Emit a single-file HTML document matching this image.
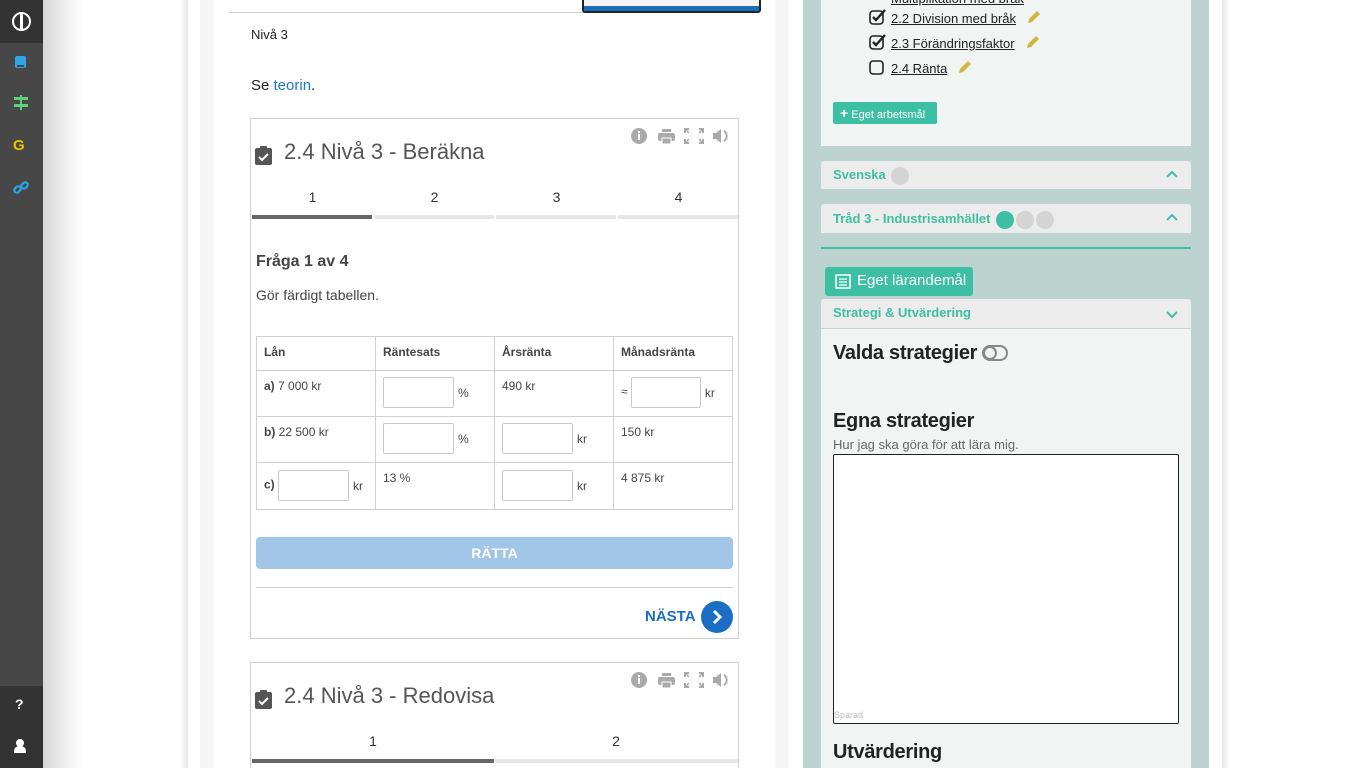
<!DOCTYPE html>
<html style="overflow:hidden;height:768px"><head><meta charset="utf-8"><style>
*{box-sizing:border-box;margin:0;padding:0}
html,body{width:1366px;height:768px;overflow:hidden}
body{background:#fff;font-family:"Liberation Sans","DejaVu Sans",sans-serif;position:relative;color:#222}
.abs{position:absolute}
#side{left:0;top:0;width:43px;height:768px;background:#474747}
#shadow{left:43px;top:0;width:40px;height:768px;background:linear-gradient(to right,#d8d8d8,#fff)}
#pshadow{left:180px;top:0;width:8px;height:768px;background:linear-gradient(to right,#fff,#e6e6e6)}
#pshadow2{left:1222px;top:0;width:8px;height:768px;background:linear-gradient(to right,#e6e6e6,#fff)}
.gray{background:#f5f5f7}
.card{border:1px solid #d0d0d0;background:#fff}
.tab{position:absolute;top:0;text-align:center;font-size:14px;color:#333}
.bar{position:absolute;height:4px;background:#e6e6e6}
table{border-collapse:collapse;font-size:12px;color:#444}
td{border:1px solid #d0d0d0;vertical-align:top;padding:8px 7px}
.inp{display:inline-block;width:71px;height:31px;border:1px solid #c8c8c8;border-radius:2px;vertical-align:middle}
.u{vertical-align:middle;margin-left:4px}
.acc{position:absolute;left:821px;width:370px;background:#ececec;color:#3dbfa3;font-weight:bold;font-size:13px;padding-left:12px;border-radius:3px 3px 0 0}
.dot{display:inline-block;width:18px;height:18px;border-radius:50%;background:#d4d4d4;vertical-align:middle;margin-left:2px}
.chev{position:absolute;right:13px;top:0}
.goal{position:absolute;left:869px;font-size:13px;color:#222}
.goal span.t{text-decoration:underline;margin-left:8px}
.pen{margin-left:10px;vertical-align:-2px}
.hic{position:absolute;left:378px;top:8px}
.clip{position:absolute;left:3px;top:26px}
</style></head><body>
<div class="abs" id="side"></div>
<div class="abs" style="left:0;top:0;width:43px;height:43px;background:#333"></div>
<div class="abs" style="left:0;top:686px;width:43px;height:82px;background:#333"></div>
<div class="abs" style="left:12px;top:12px;width:19px;height:19px;border:2px solid #fff;border-radius:50%"></div>
<div class="abs" style="left:20px;top:14px;width:3px;height:15px;background:#fff"></div>
<div class="abs" style="left:15px;top:56px;width:11px;height:12px;background:#2ea5e8;border-radius:2px"></div>
<div class="abs" style="left:17px;top:65px;width:7px;height:2px;background:#474747"></div>
<div class="abs" style="left:14px;top:97px;width:14px;height:3px;background:#5cd07a"></div>
<div class="abs" style="left:14px;top:104px;width:14px;height:3px;background:#5cd07a"></div>
<div class="abs" style="left:20px;top:95px;width:2px;height:15px;background:#5cd07a"></div>
<div class="abs" style="left:13px;top:137px;font-weight:bold;font-size:15px;color:#e8c300">G</div>
<svg class="abs" style="left:13px;top:180px" width="16" height="16" viewBox="0 0 16 16"><g fill="none" stroke="#2ea5e8" stroke-width="2.2"><rect x="1" y="7" width="7" height="5" rx="2.5" transform="rotate(-45 4.5 9.5)"/><rect x="8" y="3" width="7" height="5" rx="2.5" transform="rotate(-45 11.5 5.5)"/></g></svg>
<div class="abs" style="left:15px;top:696px;font-weight:bold;font-size:14px;color:#fff">?</div>
<div class="abs" style="left:16px;top:739px;width:8px;height:8px;background:#fff;border-radius:50%"></div>
<div class="abs" style="left:14px;top:746px;width:12px;height:7px;background:#fff;border-radius:5px 5px 0 0"></div>
<div class="abs" id="shadow"></div>
<div class="abs" id="pshadow"></div>
<div class="abs" id="pshadow2"></div>
<div class="abs gray" style="left:200px;top:0;width:14px;height:768px"></div>
<div class="abs gray" style="left:775px;top:0;width:14px;height:768px"></div>
<div class="abs" style="left:229px;top:12px;width:355px;height:1px;background:#d0d0d0"></div>
<div class="abs" style="left:582px;top:0;width:179px;height:13px;border:2px solid #222;border-top:none;border-radius:0 0 3px 3px;background:#f5f5f7"><div style="position:absolute;left:0;right:0;bottom:0;height:5px;background:#1a6fb8"></div></div>
<div class="abs" style="left:251px;top:27px;font-size:13px">Nivå 3</div>
<div class="abs" style="left:251px;top:77px;font-size:15px">Se <span style="color:#1a7ad0">teorin</span>.</div>

<div class="abs card" style="left:250px;top:118px;width:489px;height:521px">
 <svg class="hic" width="104" height="20" viewBox="0 0 104 20"><circle cx="10" cy="9" r="8" fill="#aaa"/><rect x="9" y="7" width="2" height="6" fill="#fff"/><rect x="9" y="4" width="2" height="2" fill="#fff"/><rect x="29" y="6" width="17" height="8" rx="2" fill="#aaa"/><rect x="33" y="2" width="9" height="3" fill="#aaa"/><rect x="33" y="11" width="9" height="6" fill="#aaa" stroke="#fff" stroke-width="1"/><g fill="none" stroke="#aaa" stroke-width="2"><path d="M56 6V2h4M70 2h4v4M56 12v4h4M70 16h4v-4"/><path d="M57 3l3 3M73 3l-3 3M57 15l3-3M73 15l-3-3" stroke-width="1.5"/></g><path d="M84 6h3l5-4v14l-5-4h-3z" fill="#aaa"/><path d="M95 4a6 6 0 0 1 0 10" fill="none" stroke="#aaa" stroke-width="2"/></svg>
 <svg class="clip" width="19" height="21" viewBox="0 0 19 21"><rect x="1" y="3" width="17" height="17" rx="2" fill="#555"/><rect x="6" y="1" width="7" height="4" rx="1" fill="#555"/><path d="M5 12l3 3 6-6" fill="none" stroke="#fff" stroke-width="2"/></svg>
 <div class="abs" style="left:33px;top:20px;font-size:22px;color:#555">2.4 Nivå 3 - Beräkna</div>
 <div class="tab" style="left:1px;top:70px;width:121px">1</div>
 <div class="tab" style="left:123px;top:70px;width:121px">2</div>
 <div class="tab" style="left:245px;top:70px;width:121px">3</div>
 <div class="tab" style="left:367px;top:70px;width:121px">4</div>
 <div class="bar" style="left:1px;top:96px;width:120px;background:#666"></div>
 <div class="bar" style="left:123px;top:96px;width:120px"></div>
 <div class="bar" style="left:245px;top:96px;width:120px"></div>
 <div class="bar" style="left:367px;top:96px;width:120px"></div>
 <div class="abs" style="left:5px;top:134px;font-size:16px;font-weight:bold;color:#444">Fråga 1 av 4</div>
 <div class="abs" style="left:5px;top:168px;font-size:14px;color:#444">Gör färdigt tabellen.</div>
 <table class="abs" style="left:5px;top:217px;width:477px">
  <tr style="height:34px"><td style="width:119px;font-weight:bold">Lån</td><td style="width:119px;font-weight:bold">Räntesats</td><td style="width:119px;font-weight:bold">Årsränta</td><td style="font-weight:bold">Månadsränta</td></tr>
  <tr style="height:46px"><td><b>a)</b> 7 000 kr</td><td style="padding-top:6px"><span class="inp"></span><span class="u">%</span></td><td>490 kr</td><td style="padding-top:6px">≈ <span class="inp" style="width:70px"></span><span class="u">kr</span></td></tr>
  <tr style="height:46px"><td><b>b)</b> 22 500 kr</td><td style="padding-top:6px"><span class="inp"></span><span class="u">%</span></td><td style="padding-top:6px"><span class="inp"></span><span class="u">kr</span></td><td>150 kr</td></tr>
  <tr style="height:47px"><td style="padding-top:7px"><b>c)</b> <span class="inp"></span><span class="u">kr</span></td><td>13 %</td><td style="padding-top:7px"><span class="inp"></span><span class="u">kr</span></td><td>4 875 kr</td></tr>
 </table>
 <div class="abs" style="left:5px;top:418px;width:477px;height:32px;background:#a1c6e7;border-radius:4px;color:#fff;text-align:center;line-height:32px;font-weight:bold;font-size:14px">RÄTTA</div>
 <div class="abs" style="left:5px;top:468px;width:477px;height:1px;background:#ccc"></div>
 <div class="abs" style="left:394px;top:489px;color:#1a6fc4;font-weight:bold;font-size:15px">NÄSTA</div>
 <svg class="abs" style="left:450px;top:482px" width="32" height="32" viewBox="0 0 32 32"><circle cx="16" cy="16" r="16" fill="#1a6fc4"/><path d="M13 10l6 6-6 6" fill="none" stroke="#fff" stroke-width="3"/></svg>
</div>

<div class="abs card" style="left:250px;top:662px;width:489px;height:120px">
 <svg class="hic" width="104" height="20" viewBox="0 0 104 20"><circle cx="10" cy="9" r="8" fill="#aaa"/><rect x="9" y="7" width="2" height="6" fill="#fff"/><rect x="9" y="4" width="2" height="2" fill="#fff"/><rect x="29" y="6" width="17" height="8" rx="2" fill="#aaa"/><rect x="33" y="2" width="9" height="3" fill="#aaa"/><rect x="33" y="11" width="9" height="6" fill="#aaa" stroke="#fff" stroke-width="1"/><g fill="none" stroke="#aaa" stroke-width="2"><path d="M56 6V2h4M70 2h4v4M56 12v4h4M70 16h4v-4"/><path d="M57 3l3 3M73 3l-3 3M57 15l3-3M73 15l-3-3" stroke-width="1.5"/></g><path d="M84 6h3l5-4v14l-5-4h-3z" fill="#aaa"/><path d="M95 4a6 6 0 0 1 0 10" fill="none" stroke="#aaa" stroke-width="2"/></svg>
 <svg class="clip" width="19" height="21" viewBox="0 0 19 21"><rect x="1" y="3" width="17" height="17" rx="2" fill="#555"/><rect x="6" y="1" width="7" height="4" rx="1" fill="#555"/><path d="M5 12l3 3 6-6" fill="none" stroke="#fff" stroke-width="2"/></svg>
 <div class="abs" style="left:33px;top:20px;font-size:22px;color:#555">2.4 Nivå 3 - Redovisa</div>
 <div class="tab" style="left:1px;top:70px;width:242px">1</div>
 <div class="tab" style="left:244px;top:70px;width:242px">2</div>
 <div class="bar" style="left:1px;top:96px;width:242px;background:#666"></div>
 <div class="bar" style="left:244px;top:96px;width:243px"></div>
</div>

<div class="abs" style="left:803px;top:0;width:406px;height:768px;background:#bdd3cf"></div>
<div class="abs" style="left:821px;top:0;width:370px;height:146px;background:#f0f4f3"></div>
<div class="abs" style="left:891px;top:-9px;font-size:13px;text-decoration:underline">Multiplikation med bråk</div>
<div class="goal" style="top:9px"><svg width="18" height="16" viewBox="0 0 18 16" style="vertical-align:-2px"><rect x="1" y="2" width="13" height="13" rx="3" fill="none" stroke="#222" stroke-width="1.6"/><path d="M4 8l3 3 9-10" fill="none" stroke="#222" stroke-width="2.4"/></svg><span class="t" style="margin-left:4px">2.2 Division med bråk</span><svg class="pen" width="16" height="16" viewBox="0 0 16 16"><path d="M2 14l1-4 8-8 3 3-8 8z" fill="#d4b440"/></svg></div>
<div class="goal" style="top:34px"><svg width="18" height="16" viewBox="0 0 18 16" style="vertical-align:-2px"><rect x="1" y="2" width="13" height="13" rx="3" fill="none" stroke="#222" stroke-width="1.6"/><path d="M4 8l3 3 9-10" fill="none" stroke="#222" stroke-width="2.4"/></svg><span class="t" style="margin-left:4px">2.3 Förändringsfaktor</span><svg class="pen" width="16" height="16" viewBox="0 0 16 16"><path d="M2 14l1-4 8-8 3 3-8 8z" fill="#d4b440"/></svg></div>
<div class="goal" style="top:59px"><svg width="18" height="16" viewBox="0 0 18 16" style="vertical-align:-2px"><rect x="1" y="2" width="13" height="13" rx="3" fill="none" stroke="#222" stroke-width="1.6"/></svg><span class="t" style="margin-left:4px">2.4 Ränta</span><svg class="pen" width="16" height="16" viewBox="0 0 16 16"><path d="M2 14l1-4 8-8 3 3-8 8z" fill="#d4b440"/></svg></div>
<div class="abs" style="left:833px;top:102px;width:104px;height:22px;background:#3dbfa3;border-radius:2px;color:#fff;font-size:11px;line-height:22px;padding-left:7px"><b style="font-size:14px">+</b> Eget arbetsmål</div>

<div class="acc" style="top:161px;height:28px;line-height:28px">Svenska <span class="dot"></span><svg class="chev" style="top:8px" width="12" height="12" viewBox="0 0 12 12"><path d="M1 8l5-5 5 5" fill="none" stroke="#3dbfa3" stroke-width="2"/></svg></div>
<div class="acc" style="top:204px;height:29px;line-height:29px">Tråd 3 - Industrisamhället <span class="dot" style="background:#3dbfa3"></span><span class="dot"></span><span class="dot"></span><svg class="chev" style="top:8px" width="12" height="12" viewBox="0 0 12 12"><path d="M1 8l5-5 5 5" fill="none" stroke="#3dbfa3" stroke-width="2"/></svg></div>
<div class="abs" style="left:821px;top:247px;width:370px;height:2px;background:#3dbfa3"></div>
<div class="abs" style="left:825px;top:267px;width:148px;height:29px;background:#3dbfa3;border-radius:3px;color:#fff;font-size:15px;line-height:28px;padding-left:32px">Eget lärandemål<svg style="position:absolute;left:10px;top:7px" width="16" height="15" viewBox="0 0 16 15"><rect x="1" y="1" width="14" height="13" fill="none" stroke="#fff" stroke-width="1.5"/><path d="M4 5h8M4 8h8M4 11h8" stroke="#fff" stroke-width="1.3"/></svg></div>
<div class="acc" style="top:299px;height:30px;line-height:28px;border-bottom:1px solid #d0d0d0">Strategi &amp; Utvärdering<svg class="chev" style="top:9px" width="12" height="12" viewBox="0 0 12 12"><path d="M1 4l5 5 5-5" fill="none" stroke="#3dbfa3" stroke-width="2"/></svg></div>
<div class="abs" style="left:821px;top:329px;width:370px;height:439px;background:#f0f4f3"></div>
<div class="abs" style="left:833px;top:342px;font-size:20px;font-weight:bold;color:#222;letter-spacing:-0.3px">Valda strategier</div>
<svg class="abs" style="left:982px;top:345px" width="26" height="16" viewBox="0 0 26 16"><rect x="1" y="1" width="24" height="14" rx="7" fill="none" stroke="#888" stroke-width="2"/><circle cx="8" cy="8" r="6" fill="none" stroke="#888" stroke-width="2"/></svg>
<div class="abs" style="left:833px;top:410px;font-size:20px;font-weight:bold;color:#222;letter-spacing:-0.3px">Egna strategier</div>
<div class="abs" style="left:833px;top:437px;font-size:13px;color:#666">Hur jag ska göra för att lära mig.</div>
<div class="abs" style="left:833px;top:454px;width:346px;height:270px;background:#fff;border:1.5px solid #222;border-radius:2px"><div style="position:absolute;left:0;bottom:3px;font-size:9px;color:#bbb">Sparad</div></div>
<div class="abs" style="left:833px;top:741px;font-size:20px;font-weight:bold;color:#222;letter-spacing:-0.3px">Utvärdering</div>
</body></html>
